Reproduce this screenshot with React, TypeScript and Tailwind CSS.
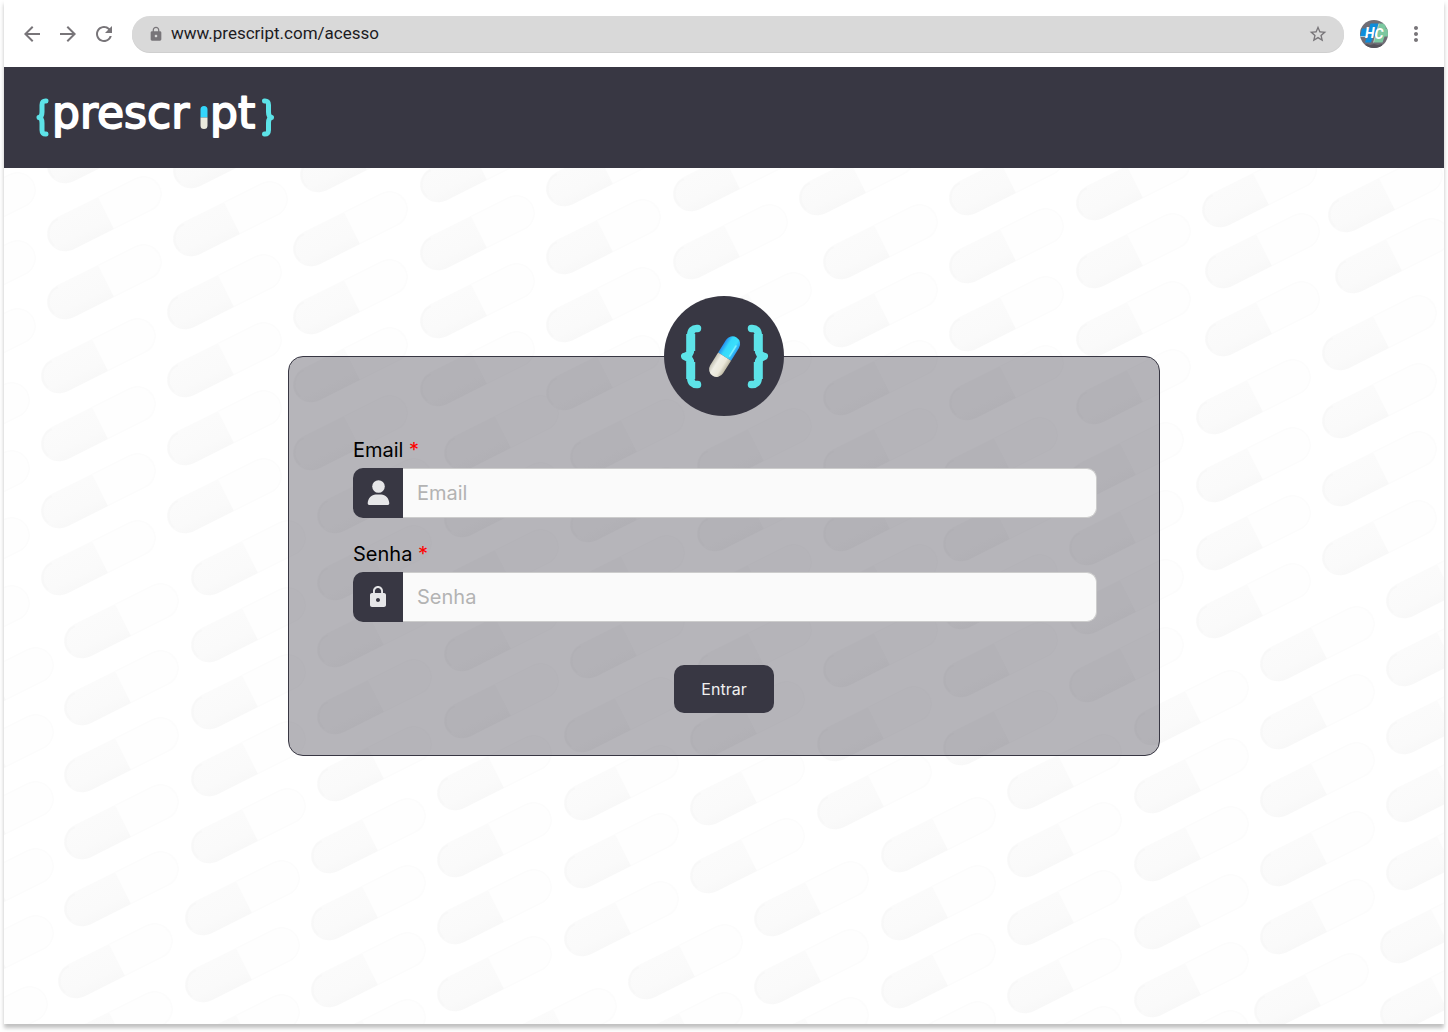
import type { ReactNode } from "react";
import { MdArrowBack, MdArrowForward, MdLock, MdMoreVert, MdRefresh, MdStarOutline } from "react-icons/md";

// Each run is a stack of capsules: [left edge, bottom edges...]
const PILL_RUNS: number[][] = [
  [-79, 249, 317, 385],
  [-85, 459, 527, 594, 662],
  [-61, 724, 791, 858, 925, 992],
  [-67, 1063],
  [47, 185, 253, 321],
  [41, 395, 463, 530, 597],
  [64, 660, 727, 794, 861, 928],
  [58, 1000, 1068],
  [173, 190, 258],
  [167, 331, 399, 467, 535],
  [191, 597, 664, 731, 798, 865],
  [185, 937, 1004, 1071],
  [300, 194],
  [293, 268, 336, 404, 472],
  [317, 535, 602, 669, 736, 803],
  [311, 875, 942, 1009, 1076],
  [420, 204, 272, 340, 408],
  [444, 472, 539, 606, 673, 740],
  [437, 812, 879, 946, 1013],
  [546, 208, 276, 344, 412],
  [570, 476, 544, 612, 680],
  [564, 754, 822, 890, 958],
  [502, 1065],
  [673, 213, 281],
  [697, 349, 417, 485, 553, 621, 689],
  [690, 758, 827, 895],
  [628, 1001, 1069],
  [799, 217],
  [823, 281, 349, 417, 485, 553, 621, 689],
  [817, 763, 831],
  [754, 938, 1006, 1074],
  [949, 217, 285, 353, 422],
  [943, 494, 563, 631, 699, 767],
  [881, 874, 942, 1010, 1078],
  [1076, 222, 290, 358, 426],
  [1069, 499, 567, 636, 704],
  [1007, 811, 879, 947, 1015, 1083],
  [1202, 229],
  [1205, 290, 358],
  [1196, 436, 504, 572, 640],
  [1134, 747, 815, 883, 951, 1019, 1087],
  [1328, 234],
  [1335, 295],
  [1322, 372, 440, 508, 577],
  [1260, 683, 751, 819, 888, 956],
  [1254, 1030],
  [1386, 620, 688, 756, 824, 892],
  [1380, 965, 1033],
];

function PillBackdrop() {
  return (
    <svg aria-hidden="true" className="absolute inset-0 h-full w-full">
      <defs>
        <linearGradient id="capsuleShade" x1="0" y1="0" x2="0" y2="1">
          <stop offset="0" stopColor="#fbfbfb" />
          <stop offset="0.7" stopColor="#fafafa" />
          <stop offset="1" stopColor="#f8f8f8" />
        </linearGradient>
        <g id="capsule" transform="rotate(-26.5)">
          <path d="M0 -17.5H42a17.5 17.5 0 0 1 0 35H0" fill="#fefefe" stroke="#fcfcfc" strokeWidth="1.5" />
          <path d="M0 -18H-45a19 18 0 0 0 0 36H0z" fill="url(#capsuleShade)" />
          <path d="M-46 -16a16 16 0 0 0 -15 22" fill="none" stroke="#f8f8f8" strokeWidth="2" />
        </g>
      </defs>
      <g transform="translate(-4 -168)">
        {PILL_RUNS.flatMap(([left, ...bottoms]) =>
          bottoms.map((b) => <use key={`${left}-${b}`} href="#capsule" x={left + 59} y={b - 40} />),
        )}
      </g>
    </svg>
  );
}

function Wordmark() {
  return (
    <svg role="img" aria-label="prescript" width="248" height="60" viewBox="32 87 248 60">
      <g fill="none" stroke="#5de3e8" strokeWidth="5" strokeLinecap="round" strokeLinejoin="round">
        <path d="M46 100q-4 -.3 -4 4v7q0 5 -3 5.500q3 .5 3 5.500v7q0 4.300 4 4" />
        <path d="M264.500 100q4 -.3 4 4v7q0 5 3 5.500q-3 .5 -3 5.500v7q0 4.300 -4 4" />
      </g>
      <g fill="#fff" stroke="#fff" strokeWidth="1.8" strokeLinejoin="round" fontFamily="'DejaVu Sans', sans-serif" fontSize="44">
        <text x="52" y="127">prescr</text>
        <text x="210" y="127">pt</text>
      </g>
      <path d="M200.500 116.500v-8a3.500 3.500 0 0 1 7 0v8z" fill="#33d6fb" />
      <path d="M200.500 116.500v8a3.500 3.500 0 0 0 7 0v-8z" fill="#e9e8db" />
    </svg>
  );
}

function Emblem() {
  return (
    <svg aria-hidden="true" className="h-[120px] w-[120px] rounded-full bg-[#383743]" viewBox="664 296 120 120">
      <defs>
        <linearGradient id="blueCap" x1="0" y1="0" x2="1" y2="0">
          <stop offset="0" stopColor="#258ff0" />
          <stop offset="0.3" stopColor="#35d8fb" />
          <stop offset="0.7" stopColor="#3be0fc" />
          <stop offset="1" stopColor="#2b9bf2" />
        </linearGradient>
        <linearGradient id="creamCap" x1="0" y1="0" x2="1" y2="0">
          <stop offset="0" stopColor="#c4c2b4" />
          <stop offset="0.3" stopColor="#f0efe6" />
          <stop offset="0.7" stopColor="#ebe8da" />
          <stop offset="1" stopColor="#bdb8a4" />
        </linearGradient>
      </defs>
      <g fill="none" stroke="#5de3e8" strokeLinecap="round" strokeLinejoin="round">
        <g strokeWidth="7.5">
          <path d="M697.500 328.500q-6.800 -.5 -6.800 7v13q0 7 -6 8q6 1 6 8v13q0 7.500 6.800 7" />
          <path d="M751.500 328.500q6.800 -.5 6.800 7v13q0 7 6 8q-6 1 -6 8v13q0 7.500 -6.800 7" />
        </g>
        <g strokeWidth="9" strokeLinecap="butt">
          <path d="M690.700 334v17M690.700 362v17M758.300 334v17M758.300 362v17" />
        </g>
      </g>
      <g transform="translate(724.600 356.600) rotate(32)">
        <path d="M-7.600 0v-15a7.600 7.600 0 0 1 15.200 0v15z" fill="url(#blueCap)" />
        <path d="M-7.600 0v15a7.600 7.600 0 0 0 15.200 0v-15z" fill="url(#creamCap)" />
        <path d="M4 -15v12" stroke="#7eeeff" strokeWidth="1.600" strokeLinecap="round" />
      </g>
    </svg>
  );
}

function Avatar() {
  return (
    <svg aria-hidden="true" className="h-7 w-7 rounded-full" viewBox="0 0 28 28">
      <rect width="28" height="28" fill="#6f6d75" />
      <path d="M2 8.500h7l1.500 -5h8l-4 13h-1.500l-2 6h-6l2 -6h-7z" fill="#0d8ddb" />
      <path d="M19 3.500h8l-1.500 5h3v8h-4l-2 6h-9l2 -6z" fill="#7cc8a0" />
      <path d="M0 16.500h8M13.500 22.500l5.500 -19" stroke="#d3eae6" strokeWidth=".7" />
      <path d="M4 25l3 -1 3 1 4 -1 4 1 4 -1v4h-18z" fill="#55535b" />
      <g fill="#fff" fontFamily="Roboto, sans-serif" fontSize="14" fontStyle="italic" fontWeight="700">
        <text x="5" y="17.500">H</text>
        <text x="14.500" y="19">C</text>
      </g>
    </svg>
  );
}

function PersonIcon() {
  return (
    <svg aria-hidden="true" width="24" height="26" viewBox="0 0 24 26" fill="#e6e6e8">
      <circle cx="12.500" cy="6.500" r="6.300" />
      <path d="M1.700 23.600c0 -5.600 4.100 -9.200 8 -9.200h5.600c3.900 0 8 3.600 8 9.200q0 1.400 -1.400 1.400h-18.800q-1.400 0 -1.400 -1.400z" />
    </svg>
  );
}

function Field({ id, label, type, icon }: { id: string; label: string; type: string; icon: ReactNode }) {
  return (
    <div className="flex flex-col gap-1.5">
      <label htmlFor={id} className="text-xl leading-6 text-black">
        {label} <span className="text-[#ff0000]">*</span>
      </label>
      <div className="flex h-[50px]">
        <span className="flex w-[50px] shrink-0 items-center justify-center rounded-l-[10px] bg-[#383743]">{icon}</span>
        <input
          id={id}
          type={type}
          placeholder={label}
          className="min-w-0 flex-1 rounded-r-[10px] border border-l-0 border-[#cccccc] bg-[#fafafa] px-3.5 text-xl outline-none placeholder:text-[#b3b3b3]"
        />
      </div>
    </div>
  );
}

export default function App() {
  return (
    <div className="min-h-screen bg-white px-1 pb-2 font-['Inter',sans-serif]">
      <div className="flex min-h-[calc(100vh-8px)] flex-col bg-white shadow-[0_4px_4px_rgba(0,0,0,0.25)]">
        <div className="flex h-[67px] items-center px-4 text-[#787579]">
          <div className="flex gap-3">
            <button type="button" aria-label="Voltar"><MdArrowBack size={24} /></button>
            <button type="button" aria-label="Avançar"><MdArrowForward size={24} /></button>
            <button type="button" aria-label="Recarregar"><MdRefresh size={24} /></button>
          </div>
          <div className="mx-4 flex h-9 min-w-0 flex-1 items-center rounded-full bg-[#d9d9d9] px-4 shadow-[0_1px_0_#cfcfcf]">
            <MdLock size={16} className="shrink-0" />
            <input
              aria-label="Endereço"
              defaultValue="www.prescript.com/acesso"
              className="ml-[7px] min-w-0 flex-1 bg-transparent font-['Roboto',sans-serif] text-[17px] text-[#1c1b1f] outline-none"
            />
            <button type="button" aria-label="Favoritar"><MdStarOutline size={20} /></button>
          </div>
          <div className="flex items-center gap-4">
            <button type="button" aria-label="Perfil"><Avatar /></button>
            <button type="button" aria-label="Menu"><MdMoreVert size={24} /></button>
          </div>
        </div>
        <header className="flex h-[101px] items-center bg-[#383743] px-7">
          <a href="#" aria-label="prescript"><Wordmark /></a>
        </header>
        <main className="relative flex flex-1 flex-col items-center overflow-hidden px-6 pt-[188px] pb-16">
          <PillBackdrop />
          <form className="relative flex w-full max-w-[872px] flex-col rounded-[15px] border border-[#383743] bg-[#383743]/37 px-16 pb-[42px]">
            <div className="-mt-[61px] mb-[22px] flex justify-center">
              <Emblem />
            </div>
            <div className="-mr-0.5 flex flex-col gap-6">
              <Field id="email" label="Email" type="email" icon={<PersonIcon />} />
              <Field id="senha" label="Senha" type="password" icon={<MdLock size={24} color="#e6e6e8" />} />
            </div>
            <button type="button" className="mt-[43px] h-12 w-[100px] self-center rounded-[10px] bg-[#383743] text-base text-[#f0f0f0]">
              Entrar
            </button>
          </form>
        </main>
      </div>
    </div>
  );
}
